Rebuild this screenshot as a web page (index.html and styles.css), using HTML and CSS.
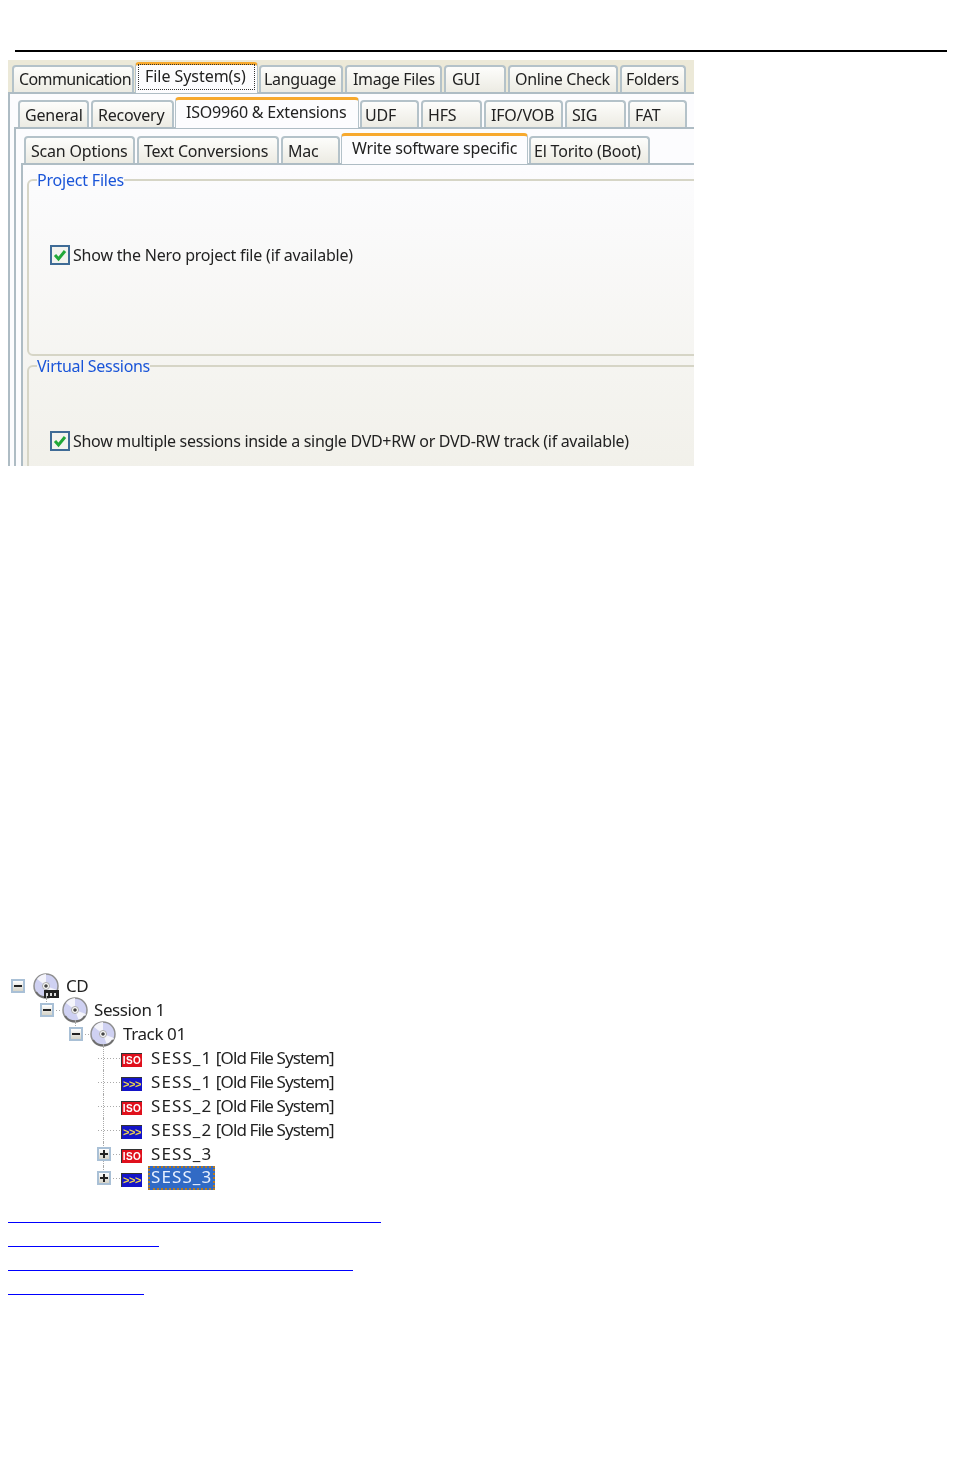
FILE: index.html
```html
<!DOCTYPE html>
<html lang="en">
<head>
    <meta charset="UTF-8">
    <title>Nero options</title>
    <link rel="stylesheet" href="styles.css">
</head>
<body>
    <hr class="rule">

    <!-- Options dialog -->
    <div class="dialog">
        <div class="tabs tabs-top">
            <div class="tab narrow-text">Communication</div>
            <div class="tab active focused"><span>File System(s)</span></div>
            <div class="tab inset-s">Language</div>
            <div class="tab inset-l">Image Files</div>
            <div class="tab inset-l">GUI</div>
            <div class="tab">Online Check</div>
            <div class="tab inset-m">Folders</div>
        </div>
        <div class="panel panel-outer">
            <div class="tabs tabs-mid">
                <div class="tab">General</div>
                <div class="tab">Recovery</div>
                <div class="tab active">ISO9960 &amp; Extensions</div>
                <div class="tab inset-s">UDF</div>
                <div class="tab">HFS</div>
                <div class="tab">IFO/VOB</div>
                <div class="tab">SIG</div>
                <div class="tab">FAT</div>
            </div>
            <div class="panel panel-mid">
                <div class="tabs tabs-low">
                    <div class="tab">Scan Options</div>
                    <div class="tab">Text Conversions</div>
                    <div class="tab">Mac</div>
                    <div class="tab active">Write software specific</div>
                    <div class="tab inset-s">El Torito (Boot)</div>
                </div>
                <div class="panel panel-inner">
                    <fieldset class="group group-project">
                        <legend>Project Files</legend>
                        <label class="check">
                            <svg class="check-box" viewBox="0 0 20 20"><rect x="1" y="1" width="18" height="18" fill="#f3f3ee" stroke="#3f6b96" stroke-width="2"/><path d="M5 10l3.500 4L15 6" fill="none" stroke="#21a838" stroke-width="3"/></svg>
                            Show the Nero project file (if available)
                        </label>
                    </fieldset>
                    <fieldset class="group group-virtual">
                        <legend>Virtual Sessions</legend>
                        <label class="check">
                            <svg class="check-box" viewBox="0 0 20 20"><rect x="1" y="1" width="18" height="18" fill="#f3f3ee" stroke="#3f6b96" stroke-width="2"/><path d="M5 10l3.500 4L15 6" fill="none" stroke="#21a838" stroke-width="3"/></svg>
                            Show multiple sessions inside a single DVD+RW or DVD-RW track (if available)
                        </label>
                    </fieldset>
                </div>
            </div>
        </div>
    </div>

    <!-- Disc tree -->
    <svg class="defs" width="0" height="0">
        <defs>
            <g id="disc">
                <circle cx="13" cy="13" r="12" fill="#cfd1f2" stroke="#8f8f8f" stroke-width="1.500"/>
                <path d="M13 13L4 6A12 12 0 0 1 13 1zM13 13L24 17A12 12 0 0 1 17 24z" fill="#f4f4fb"/>
                <path d="M3 19A12 12 0 0 0 23 19" fill="none" stroke="#6e6e6e" stroke-width="2"/>
                <circle cx="13" cy="13" r="3.500" fill="#fff" stroke="#aaa"/>
                <circle cx="13" cy="13" r="1.800" fill="#444"/>
            </g>
        </defs>
    </svg>
    <div class="tree">
        <div class="row level-0 stem-down">
            <span class="twist"><i class="box minus"></i></span>
            <svg class="disc" viewBox="0 0 26 26"><use href="#disc"/><rect x="11" y="17" width="15" height="8" fill="#222"/><path d="M13 20h2v3h-2zM17 20h2v3h-2zM21 20h2v3h-2z" fill="#ddd"/></svg>
            <span class="label">CD</span>
        </div>
        <div class="row level-1 stem-down">
            <span class="twist"><i class="box minus"></i></span>
            <svg class="disc" viewBox="0 0 26 26"><use href="#disc"/></svg>
            <span class="label">Session 1</span>
        </div>
        <div class="row level-2 stem-down">
            <span class="twist"><i class="box minus"></i></span>
            <svg class="disc" viewBox="0 0 26 26"><use href="#disc"/></svg>
            <span class="label">Track 01</span>
        </div>
        <div class="row leaf spine">
            <span class="twist"></span>
            <span class="badge iso">ISO</span>
            <span class="label"><span class="name">SESS_1</span> [Old File System]</span>
        </div>
        <div class="row leaf spine">
            <span class="twist"></span>
            <span class="badge udf">&gt;&gt;&gt;</span>
            <span class="label"><span class="name">SESS_1</span> [Old File System]</span>
        </div>
        <div class="row leaf spine">
            <span class="twist"></span>
            <span class="badge iso">ISO</span>
            <span class="label"><span class="name">SESS_2</span> [Old File System]</span>
        </div>
        <div class="row leaf spine">
            <span class="twist"></span>
            <span class="badge udf">&gt;&gt;&gt;</span>
            <span class="label"><span class="name">SESS_2</span> [Old File System]</span>
        </div>
        <div class="row leaf spine">
            <span class="twist"><i class="box plus"></i></span>
            <span class="badge iso">ISO</span>
            <span class="label"><span class="name">SESS_3</span></span>
        </div>
        <div class="row leaf spine-end">
            <span class="twist"><i class="box plus"></i></span>
            <span class="badge udf">&gt;&gt;&gt;</span>
            <span class="label selected"><span class="name">SESS_3</span></span>
        </div>
    </div>

    <!-- Liens vides -->
    <div class="links">
        <a class="link link-a" href="#"></a>
        <a class="link link-b" href="#"></a>
        <a class="link link-c" href="#"></a>
        <a class="link link-d" href="#"></a>
    </div>
</body>
</html>
```

FILE: styles.css
```css
body {
    margin: 0;
    background-color: #fff;
    font-family: "Noto Sans", "Open Sans", sans-serif;
    color: #222;
}

.rule {
    height: 2px;
    margin: 50px 15px 8px;
    border: none;
    background-color: #000;
}

/* Dialog */
.dialog {
    width: 686px;
    height: 406px;
    margin-left: 8px;
    overflow: hidden;
    background-color: #ece9d8;
    font-size: 16px;
    letter-spacing: -0.2px;
    filter: blur(0.4px);
}

.tabs {
    display: grid;
    height: 31px;
    position: relative;
    z-index: 1;
    margin-bottom: -1px;
}

.tabs-top {
    grid-template-columns: 124px 123px 86px 99px 64px 112px 68px;
    margin-top: 2px;
    padding-left: 4px;
    letter-spacing: -0.35px;
}

.tabs-mid {
    grid-template-columns: 73px 85px 184px 61px 63px 81px 63px 61px;
    padding-left: 4px;
}

.tabs-low {
    grid-template-columns: 113px 144px 61px 187px 123px;
    padding-left: 3px;
}

.tab {
    display: flex;
    align-items: center;
    margin: 3px 2px 1px 0;
    padding: 1px 0 0 5px;
    background: linear-gradient(#fdfdfb, #ecebe3);
    border: 2px solid #b4c2c9;
    border-bottom: none;
    border-radius: 4px 4px 0 0;
    box-sizing: border-box;
    white-space: nowrap;
}

.tabs-top .tab {
    padding-top: 0;
    padding-bottom: 2px;
}

.narrow-text {
    letter-spacing: -0.6px;
}

.tab.inset-s {
    padding-left: 3px;
}

.tab.inset-m {
    padding-left: 4px;
}

.tab.inset-l {
    padding-left: 6px;
}

.tab.active {
    margin: 0 1px 0 -1px;
    padding: 0 0 4px 10px;
    background: #fcfcfe;
    border: none;
    border-top: 3px solid #f7a92e;
    border-left: 1px solid #b4c2c9;
    border-right: 1px solid #b4c2c9;
}

.tabs-top .tab.focused {
    padding: 0 3px 4px;
    align-items: stretch;
    letter-spacing: -0.05px;
}

.tab.focused span {
    flex: 1;
    padding: 0 0 2px 6px;
    outline: 1px dotted #333;
}

.panel {
    background-color: #fcfcfe;
    border-top: 2px solid #aebcc4;
    border-left: 2px solid #aebcc4;
    box-sizing: border-box;
}

.panel-outer {
    height: 400px;
    padding: 3px 0 0 4px;
}

.panel-mid {
    height: 400px;
    padding: 4px 0 0 5px;
}

.panel-inner {
    height: 320px;
    padding: 5px 0 0 4px;
    background: linear-gradient(#fcfcfe, #f1f0e9);
}

/* Group boxes */
.group {
    margin: 0 -30px 0 0;
    padding: 0;
    border: 2px solid #d6d5c6;
    border-radius: 6px;
    box-sizing: border-box;
}

.group-project {
    height: 186px;
}

.group-virtual {
    height: 200px;
    letter-spacing: -0.3px;
}

.group legend {
    margin-left: 8px;
    padding: 0;
    color: #1a55d8;
    line-height: 20px;
}

.check {
    display: flex;
    align-items: center;
    gap: 3px;
    margin: 54px 0 0 21px;
}

.check-box {
    width: 20px;
    height: 20px;
}

/* Tree */
.defs {
    position: absolute;
}

.tree {
    margin-top: 508px;
    font-size: 17px;
    letter-spacing: -0.4px;
    filter: blur(0.4px);
}

.row {
    display: flex;
    align-items: center;
    height: 24px;
    position: relative;
}

.level-0 { padding-left: 11px; }
.level-1 { padding-left: 40px; }
.level-2 { padding-left: 69px; }
.leaf { padding-left: 97px; }

.twist {
    display: flex;
    align-items: center;
    width: 22px;
    height: 100%;
    background: radial-gradient(circle, #aaa 0.7px, transparent 0.8px) 0 50% / 3px 3px repeat-x;
    flex-shrink: 0;
}

.level-0 .twist {
    background: none;
}

.level-2 .twist {
    width: 21px;
}

.leaf .twist {
    width: 24px;
}

.box {
    width: 14px;
    height: 14px;
    border: 2px solid #a9c0d6;
    box-sizing: border-box;
    background: #fff linear-gradient(#fff, #d5d3c8);
    position: relative;
}

.box::before,
.plus::after {
    content: "";
    position: absolute;
    left: 1px;
    top: 4px;
    width: 8px;
    height: 2px;
    background-color: #222;
}

.plus::after {
    left: 4px;
    top: 1px;
    width: 2px;
    height: 8px;
}

.disc {
    width: 26px;
    height: 26px;
    margin-right: 7px;
    flex-shrink: 0;
}

.label {
    margin-bottom: 2px;
}

.level-1 .label {
    margin-left: -1px;
}

.name {
    letter-spacing: 1.1px;
}

.leaf .label {
    letter-spacing: -0.9px;
}

.badge {
    width: 21px;
    height: 14px;
    margin: 4px 9px 0 0;
    border-top: 1px solid #333;
    border-left: 1px solid #333;
    box-sizing: border-box;
    font-family: "Liberation Sans", sans-serif;
    font-size: 10px;
    font-weight: bold;
    line-height: 13px;
    letter-spacing: 0.4px;
    text-align: center;
    flex-shrink: 0;
}

.iso {
    background-color: #e0101c;
    color: #fff;
}

.udf {
    background-color: #1414c8;
    color: #f2d84a;
    font-size: 11px;
    letter-spacing: -0.5px;
}

.selected {
    margin: 0 0 0 -3px;
    padding: 0 1px;
    height: 24px;
    line-height: 18px;
    background-color: #316ac5;
    border: 2px dotted #b57a22;
    box-sizing: border-box;
}

.selected .name {
    color: #e8f0ff;
}

/* Tree lines */
.stem-down::after,
.spine::before,
.spine-end::before {
    content: "";
    position: absolute;
    border-left: 1px dotted #aaa;
}

.spine::before {
    left: 103px;
    top: 0;
    height: 24px;
}

.spine-end::before {
    left: 103px;
    top: 0;
    height: 8px;
}

.level-0.stem-down::after {
    left: 46px;
    top: 22px;
    height: 6px;
}

.level-1.stem-down::after {
    left: 75px;
    top: 22px;
    height: 6px;
}

.level-2.stem-down::after {
    left: 103px;
    top: 22px;
    height: 2px;
}

/* Links */
.links {
    display: flex;
    flex-direction: column;
    align-items: flex-start;
    gap: 23px;
    margin: 32px 0 0 8px;
}

.link {
    height: 1px;
    background-color: #00f;
}

.link-a { width: 373px; }
.link-b { width: 151px; }
.link-c { width: 345px; }
.link-d { width: 136px; }
```
